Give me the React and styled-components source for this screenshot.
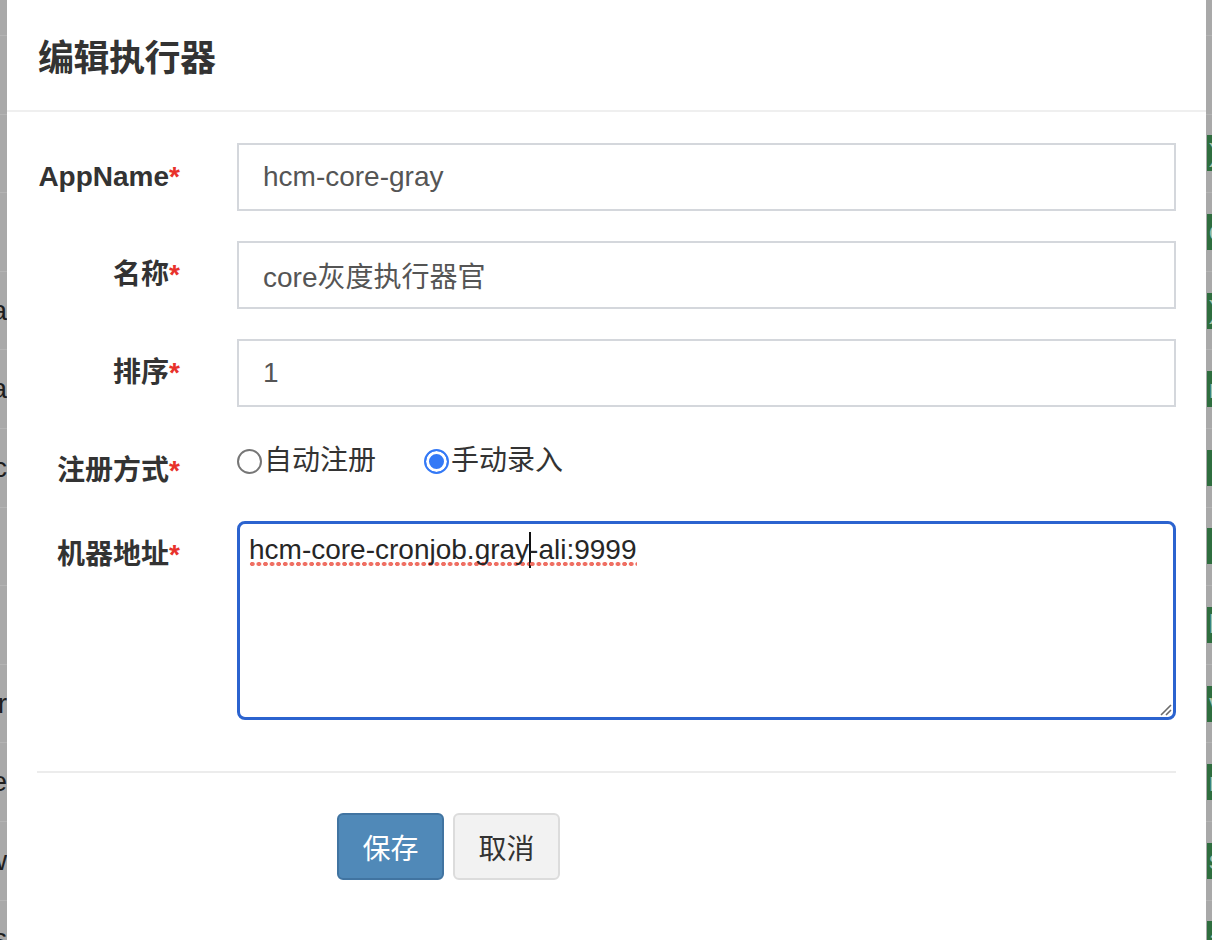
import styled, { createGlobalStyle } from "styled-components";

const GlobalStyle = createGlobalStyle`
  html, body {
    margin: 0;
    padding: 0;
    width: 1212px;
    height: 940px;
    overflow: hidden;
    background: #a9a9a9;
    font-family: "Liberation Sans", "Noto Sans CJK SC", sans-serif;
  }
  * {
    box-sizing: border-box;
  }
`;

// rows of the table that sits behind the dialog
const tableRows = [
  { left: "", green: false },
  { left: "", green: true },
  { left: "", green: true },
  { left: "da", green: true },
  { left: "na", green: true },
  { left: "rc", green: true },
  { left: "", green: true },
  { left: "", green: true },
  { left: "or", green: true },
  { left: "re", green: true },
  { left: "ew", green: true },
  { left: "es", green: true },
];

const greenText = ["", ").", "c", ")", "r", "", "", "h", "v", "r", "s", "a"];

const App = () => (
  <>
    <GlobalStyle />
    <Page>
      <BackTable>
        {tableRows.map((row, i) => (
          <BackRow key={i}>
            <EdgeCell>{row.left}</EdgeCell>
            {row.green && <GreenButton>{greenText[i]}</GreenButton>}
          </BackRow>
        ))}
      </BackTable>

      <Modal>
        <ModalHeader>
          <Title>编辑执行器</Title>
        </ModalHeader>
        <ModalBody>
          <FormRow>
            <Label>
              AppName<Star>*</Star>
            </Label>
            <Input>hcm-core-gray</Input>
          </FormRow>
          <FormRow>
            <Label>
              名称<Star>*</Star>
            </Label>
            <Input>core灰度执行器官</Input>
          </FormRow>
          <FormRow>
            <Label>
              排序<Star>*</Star>
            </Label>
            <Input>1</Input>
          </FormRow>
          <FormRow>
            <Label>
              注册方式<Star>*</Star>
            </Label>
            <RadioGroup>
              <RadioLabel>
                <Radio />
                自动注册
              </RadioLabel>
              <RadioLabel>
                <Radio $checked />
                手动录入
              </RadioLabel>
            </RadioGroup>
          </FormRow>
          <FormRow>
            <Label>
              机器地址<Star>*</Star>
            </Label>
            <TextArea>
              <Misspelled>hcm-core-cronjob.gray</Misspelled>
              <Caret />
              <Misspelled>-ali:9999</Misspelled>
              <ResizeGrip width="14" height="14" viewBox="0 0 14 14">
                <path d="M13 3 L3 13 M13 8 L8 13" stroke="#6b6b6b" strokeWidth="1.6" fill="none" />
              </ResizeGrip>
            </TextArea>
          </FormRow>
          <Divider />
          <Actions>
            <Button $primary>保存</Button>
            <Button>取消</Button>
          </Actions>
        </ModalBody>
      </Modal>
    </Page>
  </>
);

export default App;

const Page = styled.div`
  position: relative;
  width: 1212px;
  height: 940px;
  overflow: hidden;
  background: #a9a9a9;
`;

const BackTable = styled.div`
  display: flex;
  flex-direction: column;
  padding-top: 35px;
`;

const BackRow = styled.div`
  display: flex;
  align-items: center;
  justify-content: space-between;
  height: 78.6px;
  border-top: 1px solid #b4b4b4;
`;

const EdgeCell = styled.div`
  display: flex;
  justify-content: flex-end;
  width: 7px;
  overflow: hidden;
  white-space: nowrap;
  font-size: 28px;
  color: #1e1e1e;
`;

const GreenButton = styled.div`
  display: flex;
  align-items: center;
  width: 40px;
  height: 36px;
  margin-right: -35px;
  padding-left: 2px;
  background: #2f6e3f;
  color: #a9c4ae;
  font-size: 26px;
  white-space: nowrap;
  overflow: hidden;
`;

const Modal = styled.div`
  position: absolute;
  top: 0;
  left: 7px;
  width: 1199px;
  height: 960px;
  background: #ffffff;
`;

const ModalHeader = styled.div`
  display: flex;
  align-items: center;
  height: 112px;
  padding: 0 31px;
  border-bottom: 2px solid #efefef;
`;

const Title = styled.h4`
  margin: 0;
  font-size: 36px;
  font-weight: 700;
  color: #333333;
  letter-spacing: -0.5px;
`;

const ModalBody = styled.div`
  display: flex;
  flex-direction: column;
  gap: 30px;
  padding: 31px 30px 0 30px;
`;

const FormRow = styled.div`
  display: grid;
  grid-template-columns: 143px 1fr;
  column-gap: 57px;
  align-items: start;
`;

const Label = styled.label`
  padding-top: 14px;
  padding-left: 1px;
  line-height: 40px;
  text-align: right;
  font-size: 28px;
  font-weight: 700;
  color: #333333;
  white-space: nowrap;
`;

const Star = styled.span`
  color: #e8322b;
`;

const Input = styled.div`
  display: flex;
  align-items: center;
  height: 68px;
  padding: 0 24px;
  border: 2px solid #d4d7dc;
  font-size: 28px;
  color: #555555;
`;

const RadioGroup = styled.div`
  display: flex;
  align-items: center;
  gap: 48px;
  height: 54px;
  padding-bottom: 6px;
`;

const RadioLabel = styled.label`
  display: flex;
  align-items: center;
  font-size: 28px;
  line-height: 40px;
  color: #333333;
`;

const Radio = styled.span`
  display: inline-block;
  width: 25px;
  height: 25px;
  margin-right: 2px;
  border-radius: 50%;
  border: 2px solid ${(p) => (p.$checked ? "#3479f6" : "#767676")};
  background: ${(p) => (p.$checked ? "#3479f6" : "#ffffff")};
  box-shadow: ${(p) => (p.$checked ? "inset 0 0 0 3px #ffffff" : "none")};
`;

const TextArea = styled.div`
  position: relative;
  height: 199px;
  padding: 6px 9px;
  border: 3px solid #2b63cf;
  border-radius: 8px;
  font-size: 28px;
  line-height: 40px;
  color: #262626;
  white-space: nowrap;
`;

const Misspelled = styled.span`
  padding-bottom: 2px;
  background-image: radial-gradient(circle, #ef6f63 2.1px, transparent 2.5px);
  background-size: 6.6px 6px;
  background-repeat: repeat-x;
  background-position: 0 100%;
`;

const Caret = styled.span`
  display: inline-block;
  width: 0;
  height: 36px;
  margin-right: -2px;
  border-left: 2px solid #111111;
  vertical-align: -9px;
`;

const ResizeGrip = styled.svg`
  position: absolute;
  right: 1px;
  bottom: 1px;
`;

const Divider = styled.div`
  height: 2px;
  margin-top: 21px;
  background: #ececec;
`;

const Actions = styled.div`
  display: flex;
  gap: 9px;
  margin-top: 10px;
  padding-left: 300px;
`;

const Button = styled.button`
  width: 107px;
  height: 67px;
  border-radius: 6px;
  border: 2px solid ${(p) => (p.$primary ? "#4174a1" : "#dcdcdc")};
  background: ${(p) => (p.$primary ? "#5089b8" : "#f2f2f2")};
  color: ${(p) => (p.$primary ? "#ffffff" : "#333333")};
  font-family: "Liberation Sans", "Noto Sans CJK SC", sans-serif;
  font-size: 28px;
  cursor: pointer;
`;
